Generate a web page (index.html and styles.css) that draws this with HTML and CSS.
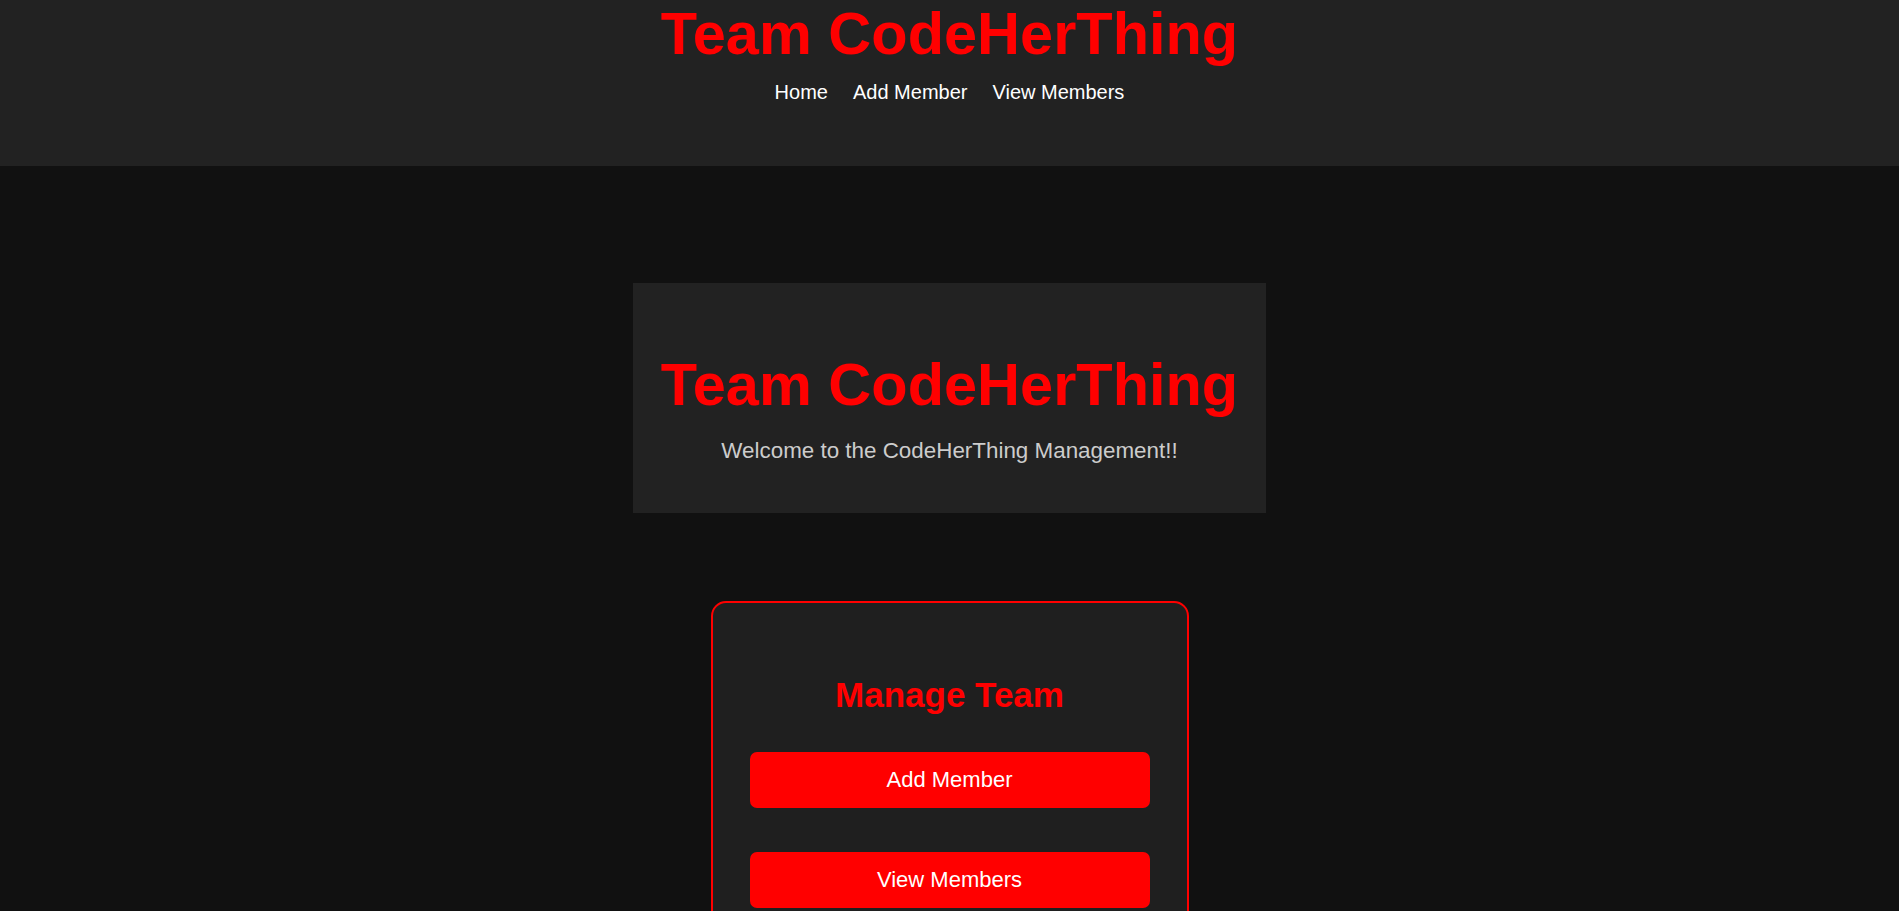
FILE: index.html
```html
<!DOCTYPE html>
<html lang="en">
<head>
<meta charset="utf-8">
<title>Team CodeHerThing</title>
<link rel="stylesheet" href="styles.css">
</head>
<body>
  <header class="site-header">
    <h1 class="brand">Team CodeHerThing</h1>
    <nav class="nav">
      <a href="#" class="nav-link">Home</a>
      <a href="#" class="nav-link">Add Member</a>
      <a href="#" class="nav-link">View Members</a>
    </nav>
  </header>
  <main class="main">
    <section class="hero">
      <h1 class="hero-title">Team CodeHerThing</h1>
      <p class="hero-text">Welcome to the CodeHerThing Management!!</p>
    </section>
    <section class="card">
      <h2 class="card-title">Manage Team</h2>
      <div class="actions">
        <button class="btn">Add Member</button>
        <button class="btn">View Members</button>
      </div>
    </section>
  </main>
</body>
</html>
```

FILE: styles.css
```css
* { box-sizing: border-box; }

html, body {
  margin: 0;
  padding: 0;
}

body {
  background: #111111;
  font-family: "Liberation Sans", Arial, sans-serif;
  color: #ffffff;
  overflow: hidden;
}

.site-header {
  background: #222222;
  height: 166px;
  padding-top: 4px;
  display: flex;
  flex-direction: column;
  align-items: center;
}

.brand {
  margin: 0;
  font-size: 59.5px;
  line-height: 59px;
  font-weight: bold;
  color: #ff0000;
}

.nav {
  margin-top: 19px;
  display: flex;
  gap: 25px;
}

.nav-link {
  color: #ffffff;
  text-decoration: none;
  font-size: 20px;
  line-height: 20px;
}

.main {
  display: flex;
  flex-direction: column;
  align-items: center;
  padding-top: 117px;
}

.hero {
  width: fit-content;
  background: #222222;
  padding: 72px 28px 51px;
  text-align: center;
}

.hero-title {
  margin: 0;
  font-size: 59.5px;
  line-height: 59px;
  font-weight: bold;
  color: #ff0000;
}

.hero-text {
  margin: 26px 0 0;
  font-size: 22.4px;
  line-height: 22px;
  color: #cccccc;
}

.card {
  margin-top: 88px;
  width: 478px;
  background: #1f1f1f;
  border: 2px solid #ff0000;
  border-radius: 15px;
  padding: 74px 37px 40px;
  text-align: center;
}

.card-title {
  margin: 0;
  font-size: 35px;
  line-height: 35px;
  font-weight: bold;
  color: #ff0000;
}

.actions {
  margin-top: 40px;
  display: flex;
  flex-direction: column;
  gap: 44px;
}

.btn {
  display: block;
  width: 100%;
  height: 56px;
  border: none;
  border-radius: 7px;
  background: #ff0000;
  color: #ffffff;
  font-family: "Liberation Sans", Arial, sans-serif;
  font-size: 22px;
  cursor: pointer;
}
```
